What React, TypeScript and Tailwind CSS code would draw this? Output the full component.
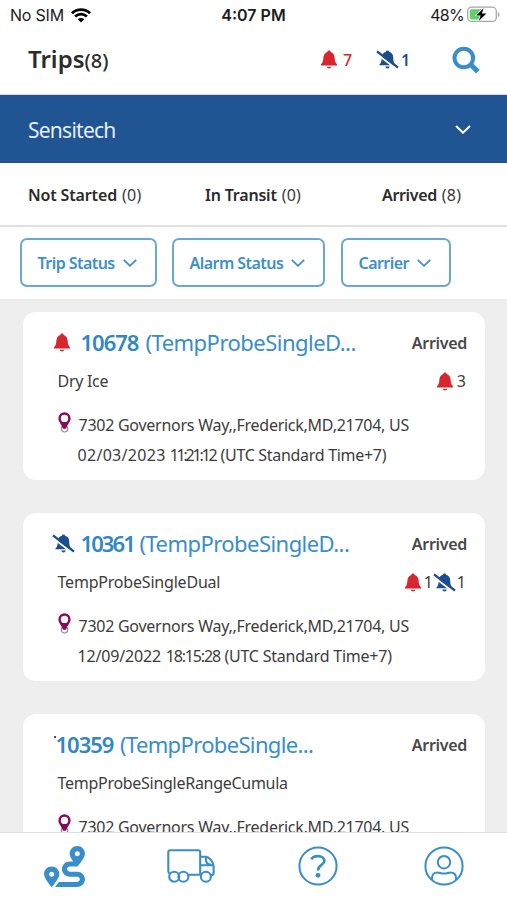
import type { ReactNode } from "react";
import { FaRoute } from "react-icons/fa";

function Bell() {
  return (
    <svg className="h-[19px] w-4 shrink-0 text-[#d8262f]" viewBox="0 0 16 19" fill="currentColor">
      <path d="M8 0.6C8.9 0.6 9.5 1.1 9.6 1.9C12 2.6 13.4 4.6 13.6 7.4C13.8 10.6 14.2 12.7 16 14.2V15.6H0V14.2C1.8 12.7 2.2 10.6 2.4 7.4C2.6 4.6 4 2.6 6.4 1.9C6.5 1.1 7.1 0.6 8 0.6Z" />
      <path d="M5.9 16.8H10.1C10.1 18 9.2 18.5 8 18.5S5.9 18 5.9 16.8Z" />
    </svg>
  );
}

function BellOff() {
  return (
    <svg className="h-[19px] w-[23px] shrink-0 text-[#1c4e8f]" viewBox="0 0 23 19" fill="currentColor">
      <path d="M11.5 0.6C12.4 0.6 12.9 1 13 1.8C15.8 2.5 17.1 4.5 17.2 7.2C17.3 10.6 17.5 12.9 19.4 14.4V15.3H3.4V14.4C5.3 12.9 5.7 10.6 5.8 7.2C5.9 4.5 7.2 2.5 10 1.8C10.1 1 10.6 0.6 11.5 0.6Z" />
      <path d="M9.4 16.6H13.6C13.6 17.9 12.7 18.6 11.5 18.6S9.4 17.9 9.4 16.6Z" />
      <path d="M0 3.2L20 18.6" stroke="white" strokeWidth="2" />
      <path d="M1 1.4L22 17.6" stroke="currentColor" strokeWidth="2.4" />
    </svg>
  );
}

function Pin() {
  return (
    <svg className="-mt-[1px] h-[21px] w-[13px] shrink-0" viewBox="0 0 13 21" fill="none">
      <circle cx="6.5" cy="16.8" r="3.2" stroke="#8b8b8b" strokeWidth="1.2" />
      <path
        fillRule="evenodd"
        d="M6.5 0.3A6.1 6.1 0 0 1 12.6 6.4C12.6 9.8 9.4 12.2 8 16.8H5C3.6 12.2 0.4 9.8 0.4 6.4A6.1 6.1 0 0 1 6.5 0.3ZM6.5 2.7A3.7 3.7 0 1 0 6.5 10.1A3.7 3.7 0 1 0 6.5 2.7Z"
        fill="#870a5c"
      />
    </svg>
  );
}

function Chevron({ className }: { className: string }) {
  return (
    <svg className={className} viewBox="0 0 14 8" fill="none" stroke="currentColor" strokeWidth="1.8">
      <path d="M0.8 0.8L7 6.8L13.2 0.8" />
    </svg>
  );
}

function StatusBar() {
  return (
    <div className="grid h-[30px] grid-cols-3 items-center pr-[7px] pl-[10px] font-[Inter,sans-serif] text-[16px] text-[#1c1c1c]">
      <div className="flex items-center gap-[7px]">
        <span className="tracking-[-0.2px]">No SIM</span>
        <svg className="h-[15px] w-5" viewBox="0 0 20 15" fill="none" stroke="#000" strokeWidth="2.7">
          <path d="M0.9 5.2C6 0.3 14 0.3 19.1 5.2" />
          <path d="M4.1 8.5C7.4 5.4 12.6 5.4 15.9 8.5" />
          <path d="M10 14.4L6.8 11.2C8.6 9.6 11.4 9.6 13.2 11.2Z" fill="#000" stroke="none" />
        </svg>
      </div>
      <div className="pr-[3px] text-center font-semibold whitespace-nowrap">4:07 PM</div>
      <div className="flex items-center justify-end gap-[3px]">
        <span className="tracking-[-0.7px]">48%</span>
        <svg className="-mt-[2px] h-[17px] w-[33px]" viewBox="0 0 33 17">
          <rect x="0.7" y="1.2" width="28.6" height="14.2" rx="4" fill="none" stroke="#a6a6a6" strokeWidth="1.3" />
          <rect x="2.8" y="3.2" width="13" height="10.2" rx="2" fill="#5fcf6b" />
          <path d="M31 6V10.8C32 10.4 32.5 9.5 32.5 8.4S32 6.4 31 6Z" fill="#a6a6a6" />
          <path d="M16.6 2.2L9.2 9.4H13.6L11.8 15L19.4 7.6H14.9Z" fill="#000" stroke="#fff" strokeWidth="1.4" paintOrder="stroke" />
        </svg>
      </div>
    </div>
  );
}

function Tab({ label, count, className }: { label: string; count: string; className: string }) {
  return (
    <div className="flex gap-[5px] text-[16px] text-[#2b2b2b]">
      <span className={"font-semibold " + className}>{label}</span>
      <span className="tracking-[0.2px] text-[#3a3a3a]">{count}</span>
    </div>
  );
}

function Chip({ label, className }: { label: string; className: string }) {
  return (
    <button
      className={
        "flex h-[49px] items-center justify-between rounded-[7px] border-2 border-[#69a8d6] pr-[18px] pl-[15.5px] text-[16px] font-semibold tracking-[-0.55px] whitespace-nowrap text-[#3d8fcb] " +
        className
      }
    >
      {label}
      <Chevron className="h-[8px] w-[14px]" />
    </button>
  );
}

type CardProps = {
  icon?: ReactNode;
  id: ReactNode;
  name: ReactNode;
  product: ReactNode;
  alarms?: ReactNode;
  time?: ReactNode;
};

function Card({ icon, id, name, product, alarms, time }: CardProps) {
  return (
    <section className="h-[168px] shrink-0 rounded-[13px] bg-white pt-[15px] pr-[18px] text-[16px] leading-6 whitespace-nowrap text-[#3c3c3c]">
      <div className="flex h-[30px] items-center justify-between text-[22px] leading-[30px]">
        <div className="flex items-center text-[#388dcb]">
          {icon}
          {id}
          {name}
        </div>
        <span className="pt-px text-[16px] font-semibold tracking-[-0.3px] text-[#484848]">Arrived</span>
      </div>
      <div className="mt-3 flex items-center justify-between pl-[35px]">
        {product}
        <div className="flex items-center pr-[1px]">{alarms}</div>
      </div>
      <div className="mt-5 flex pl-[35px]">
        <Pin />
        <span className="ml-[8px] tracking-[-0.26px]">7302 Governors Way,,Frederick,MD,21704, US</span>
      </div>
      <div className="mt-1.5 flex pl-[55px]">{time}</div>
    </section>
  );
}

export default function App() {
  return (
    <div className="flex h-[900px] w-[507px] flex-col overflow-hidden bg-white font-['Noto_Sans','Open_Sans',sans-serif]">
      <StatusBar />
      <header className="flex h-[65px] items-center border-b border-[#d5dbe3] pb-[5px] pl-7">
        <h1 className="w-[293px] text-[24px] leading-9 font-semibold text-[#2c2c2c]">
          Trips<span className="text-[20px] font-medium">(8)</span>
        </h1>
        <Bell />
        <span className="ml-[6px] w-[33px] text-[16px] font-medium text-[#d8262f]">7</span>
        <BellOff />
        <span className="ml-[2px] w-[51px] text-[16px] font-semibold text-[#1c4e8f]">1</span>
        <svg className="h-7 w-7 text-[#388dcb]" viewBox="0 0 28 28" fill="none" stroke="currentColor">
          <circle cx="11.8" cy="12" r="9.3" strokeWidth="4" />
          <path d="M18.8 18.8L26 25.6" strokeWidth="5" />
        </svg>
      </header>
      <div className="flex h-[68px] items-center justify-between bg-[#205493] pr-9 pl-7 text-[21px] tracking-[-0.75px] text-[#e6eef7]">
        <span className="pt-[3px]">Sensitech</span>
        <Chevron className="h-[9px] w-[16px] text-white" />
      </div>
      <nav className="flex h-[63.5px] items-center border-b-2 border-[#e0e0e0] pt-0.5 pl-[28px]">
        <div className="w-[177px]"><Tab label="Not Started" count="(0)" className="tracking-[-0.15px]" /></div>
        <div className="w-[177px]"><Tab label="In Transit" count="(0)" className="tracking-[-0.2px]" /></div>
        <Tab label="Arrived" count="(8)" className="tracking-[-0.35px]" />
      </nav>
      <div className="flex h-[72px] items-center pl-5">
        <Chip label="Trip Status" className="w-[137px]" />
        <Chip label="Alarm Status" className="ml-[15px] w-[153px]" />
        <Chip label="Carrier" className="ml-4 w-[110px]" />
      </div>
      <main className="flex min-h-0 flex-1 flex-col gap-[33px] overflow-hidden bg-[#eeeeee] pt-[13.5px] pr-[22px] pl-[22.5px]">
        <Card
          icon={<span className="mr-[10.5px] ml-[31.5px] flex"><Bell /></span>}
          id={<b className="mr-[7px] font-semibold tracking-[-1px] text-[#3087c4]">10678</b>}
          name={<span className="tracking-[-0.52px]">(TempProbeSingleD...</span>}
          product={<span className="tracking-[-0.3px]">Dry Ice</span>}
          alarms={<><Bell /><span className="ml-[4px]">3</span></>}
          time={
            <>
              <span className="mr-[4px] tracking-[0.3px]">02/03/2023</span>
              <span className="mr-[5px] tracking-[-2.2px]">11:21:12</span>
              <span className="tracking-[-0.3px]">(UTC Standard Time+7)</span>
            </>
          }
        />
        <Card
          icon={<span className="mr-[6px] ml-[29px] flex"><BellOff /></span>}
          id={<b className="mr-[5.5px] font-semibold tracking-[-1.9px] text-[#3087c4]">10361</b>}
          name={<span className="tracking-[-0.55px]">(TempProbeSingleD...</span>}
          product={<span className="tracking-[-0.2px]">TempProbeSingleDual</span>}
          alarms={<><Bell /><span className="ml-[3px]">1</span><BellOff /><span className="ml-[1px]">1</span></>}
          time={
            <>
              <span className="mr-[4.5px] tracking-[-0.15px]">12/09/2022</span>
              <span className="mr-[4.5px] tracking-[-1.15px]">18:15:28</span>
              <span className="tracking-[-0.22px]">(UTC Standard Time+7)</span>
            </>
          }
        />
        <Card
          icon={<span className="mt-[-15px] ml-[31px] h-[2px] w-[2px] bg-[#3b4fa0]" />}
          id={<b className="mr-[6.5px] font-semibold tracking-[-1px] text-[#3087c4]">10359</b>}
          name={<span className="tracking-[-0.65px]">(TempProbeSingle...</span>}
          product={<span className="tracking-[-0.28px]">TempProbeSingleRangeCumula</span>}
        />
      </main>
      <footer className="flex h-[68.5px] items-center border-t-[1.5px] border-[#dcdcdc] pl-[44px] text-[#388dcb]">
        <FaRoute className="size-[41px]" />
        <svg className="ml-[81.5px] h-[34px] w-[48px]" viewBox="0 0 48 34" fill="none" stroke="currentColor" strokeWidth="2.1" strokeLinejoin="round">
          <path d="M2.6 24.5C1.7 23.8 1.3 23.6 1.3 22V3.2C1.3 2 2 1.2 3.2 1.2H31.2C32.4 1.2 33.2 2 33.2 3.2V25.8H21.4" />
          <path d="M33.2 7.8H38.8C41.5 7.8 46.6 12.6 46.6 17V24C46.6 26 45.4 26.2 43.8 26.2M33.2 16.2H46.4M39 8V11.2C39 13.6 41 15.2 44 15.8" />
          <circle cx="7.2" cy="27.7" r="5" />
          <circle cx="16.4" cy="27.7" r="5" />
          <circle cx="38.9" cy="27.7" r="5" />
        </svg>
        <svg className="ml-[83px] size-10" viewBox="0 0 40 40" fill="none" stroke="currentColor">
          <circle cx="20" cy="20" r="18.6" strokeWidth="2" />
          <path d="M13.4 13.4C14.4 11.2 16.8 10.2 20 10.2C23.8 10.2 26.4 12.2 26.4 14.9C26.4 18.8 20 19 20 24.6" strokeWidth="2.7" />
          <circle cx="20" cy="29.3" r="2.4" fill="currentColor" stroke="none" />
        </svg>
        <svg className="ml-[86px] size-10" viewBox="0 0 40 40" fill="none" stroke="currentColor" strokeWidth="2">
          <circle cx="20" cy="20" r="18.6" />
          <circle cx="20" cy="16.2" r="6.2" />
          <path d="M8 34V32C8 28.4 10 26.4 13.2 26.4C16 26.4 16.6 27.6 20 27.6S24 26.4 26.8 26.4C30 26.4 32 28.4 32 32V34" />
        </svg>
      </footer>
    </div>
  );
}
